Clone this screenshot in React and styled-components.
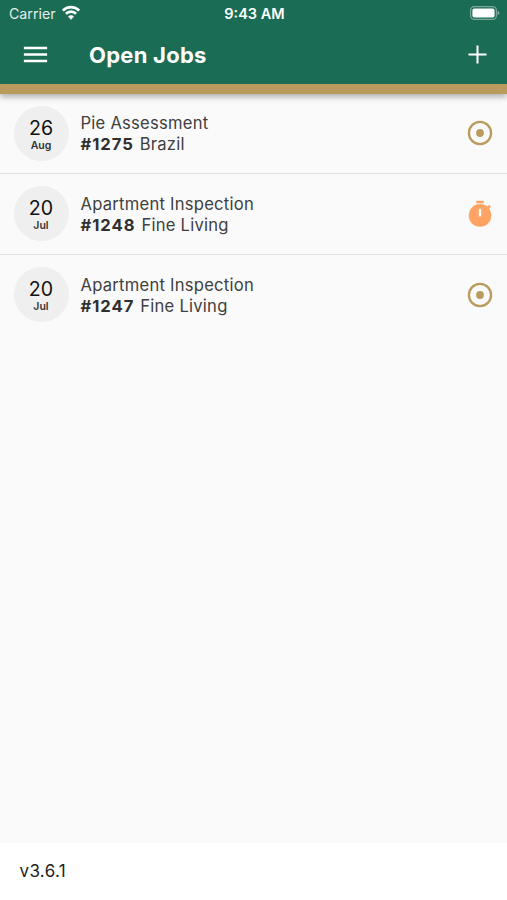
import React from 'react';
import styled, { createGlobalStyle } from 'styled-components';

const jobs = [
    { day: '26', month: 'Aug', title: 'Pie Assessment', number: '#1275', client: 'Brazil', status: 'open' },
    { day: '20', month: 'Jul', title: 'Apartment Inspection', number: '#1248', client: 'Fine Living', status: 'running' },
    { day: '20', month: 'Jul', title: 'Apartment Inspection', number: '#1247', client: 'Fine Living', status: 'open' },
];

const WifiIcon = () => (
    <svg width="20" height="16" viewBox="0 0 20 16" fill="none" stroke="#fff" strokeWidth="2.7">
        <path d="M1.8 5.6 A11.6 11.6 0 0 1 18.2 5.6" />
        <path d="M4.9 8.8 A7.2 7.2 0 0 1 15.1 8.8" />
        <path d="M7 11.5 A4.2 4.2 0 0 1 13 11.5 L10 14.7 Z" fill="#fff" stroke="none" />
    </svg>
);

const BatteryIcon = () => (
    <svg width="30" height="14" viewBox="0 0 30 14">
        <rect x="0.6" y="0.6" width="25.8" height="12.8" rx="3.6" fill="none" stroke="#fff" strokeOpacity="0.42" strokeWidth="1.2" />
        <rect x="2.4" y="2.4" width="22.2" height="9.2" rx="2" fill="#fff" />
        <path d="M27.6 4.8 Q29.4 5.5 29.4 7 Q29.4 8.5 27.6 9.2 Z" fill="#fff" fillOpacity="0.5" />
    </svg>
);

const MenuIcon = () => (
    <svg width="31" height="31" viewBox="0 0 24 24" fill="#fff">
        <path d="M3 18h18v-2H3v2zm0-5h18v-2H3v2zm0-7v2h18V6H3z" />
    </svg>
);

const AddIcon = () => (
    <svg width="31" height="31" viewBox="0 0 24 24" fill="#fff">
        <path d="M19 12.8h-6.2V19h-1.6v-6.2H5v-1.6h6.2V5h1.6v6.2H19z" />
    </svg>
);

const OpenIcon = () => (
    <svg width="26" height="26" viewBox="0 0 26 26">
        <circle cx="13" cy="13" r="11.1" fill="none" stroke="#b99b5d" strokeWidth="2.3" />
        <circle cx="13" cy="13" r="3.9" fill="#b99b5d" />
    </svg>
);

const TimerIcon = () => (
    <svg width="26" height="28" viewBox="0 0 26 28">
        <rect x="9.2" y="0.8" width="7.6" height="2.5" fill="#ffa464" />
        <circle cx="13" cy="15.4" r="11.3" fill="#ffa464" />
        <path d="M19.5 7.3 L22 4.8 L24 6.8 L21.4 9.4 Z" fill="#ffa464" />
        <rect x="11.8" y="8.8" width="2.4" height="7.6" fill="#fafafa" />
    </svg>
);

const App = () => {
    return (
        <>
            <GlobalStyle />
            <Screen>
                <Header>
                    <StatusBar>
                        <Carrier>
                            Carrier
                            <WifiIcon />
                        </Carrier>
                        <Clock>9:43 AM</Clock>
                        <Battery>
                            <BatteryIcon />
                        </Battery>
                    </StatusBar>
                    <Toolbar>
                        <IconButton aria-label="Menu">
                            <MenuIcon />
                        </IconButton>
                        <Title>Open Jobs</Title>
                        <IconButton aria-label="Add job">
                            <AddIcon />
                        </IconButton>
                    </Toolbar>
                </Header>

                <JobList>
                    {jobs.map((job, index) => (
                        <JobRow key={job.number} $last={index === jobs.length - 1}>
                            <DateBadge>
                                <Day>{job.day}</Day>
                                <Month>{job.month}</Month>
                            </DateBadge>
                            <JobText>
                                <JobLine>{job.title}</JobLine>
                                <JobLine>
                                    <JobNumber>{job.number}</JobNumber>
                                    {job.client}
                                </JobLine>
                            </JobText>
                            {job.status === 'running' ? <TimerIcon /> : <OpenIcon />}
                        </JobRow>
                    ))}
                </JobList>

                <Footer>v3.6.1</Footer>
            </Screen>
        </>
    );
};

export default App;

const GlobalStyle = createGlobalStyle`
  * {
    box-sizing: border-box;
  }

  body {
    margin: 0;
    font-family: Inter, "Liberation Sans", sans-serif;
  }

  svg {
    display: block;
    flex-shrink: 0;
  }
`;

const Screen = styled.div`
  display: flex;
  flex-direction: column;
  height: 100vh;
  background: #fafafa;
`;

const Header = styled.header`
  position: relative;
  height: 93.5px;
  flex-shrink: 0;
  background: #1b6c54;
  border-bottom: 10px solid #b99b5d;
  box-shadow: 0 3px 6px rgba(0, 0, 0, 0.3);
  color: #fff;
`;

const StatusBar = styled.div`
  display: grid;
  grid-template-columns: 1fr auto 1fr;
  align-items: center;
  height: 27px;
  padding: 0 7px 0 9px;
`;

const Carrier = styled.div`
  display: flex;
  align-items: center;
  gap: 5px;
  font-size: 14.2px;
  color: #e4efeb;

  svg {
    margin-top: -1px;
  }
`;

const Clock = styled.div`
  font-size: 14.5px;
  font-weight: 600;
`;

const Battery = styled.div`
  display: flex;
  justify-content: flex-end;

  svg {
    margin-top: -1px;
  }
`;

const Toolbar = styled.div`
  display: flex;
  align-items: center;
  height: 55px;
  padding: 0 14px 0 19.6px;
`;

const IconButton = styled.button`
  padding: 0;
  border: 0;
  background: none;
`;

const Title = styled.h1`
  flex: 1;
  margin: 0 0 0 38.4px;
  font-size: 22px;
  font-weight: 700;
  letter-spacing: 0.25px;
`;

const JobList = styled.main`
  flex: 1;
`;

const JobRow = styled.div`
  display: flex;
  align-items: center;
  height: 80.6px;
  padding: 0 14px 0 13.5px;
  border-bottom: ${({ $last }) => ($last ? 'none' : '1px solid #dfdfdf')};
`;

const DateBadge = styled.div`
  display: flex;
  flex-direction: column;
  align-items: center;
  justify-content: center;
  width: 55px;
  height: 55px;
  padding-top: 2.6px;
  border-radius: 50%;
  background: #efefef;
`;

const Day = styled.span`
  font-size: 19.6px;
  line-height: 22px;
  color: #111;
`;

const Month = styled.span`
  font-size: 10.5px;
  font-weight: 600;
  line-height: 14px;
  color: #333;
`;

const JobText = styled.div`
  flex: 1;
  margin-left: 12px;
  padding-top: 1.4px;
`;

const JobLine = styled.div`
  font-size: 16.6px;
  line-height: 21px;
  letter-spacing: 0.24px;
  color: #404040;
`;

const JobNumber = styled.span`
  margin-right: 6px;
  font-weight: 700;
  letter-spacing: 0.95px;
  color: #303030;
`;

const Footer = styled.footer`
  height: 57px;
  flex-shrink: 0;
  padding: 18px 19.5px;
  background: #fff;
  font-size: 17px;
  line-height: 21px;
  letter-spacing: 0.35px;
  color: #222;
`;
